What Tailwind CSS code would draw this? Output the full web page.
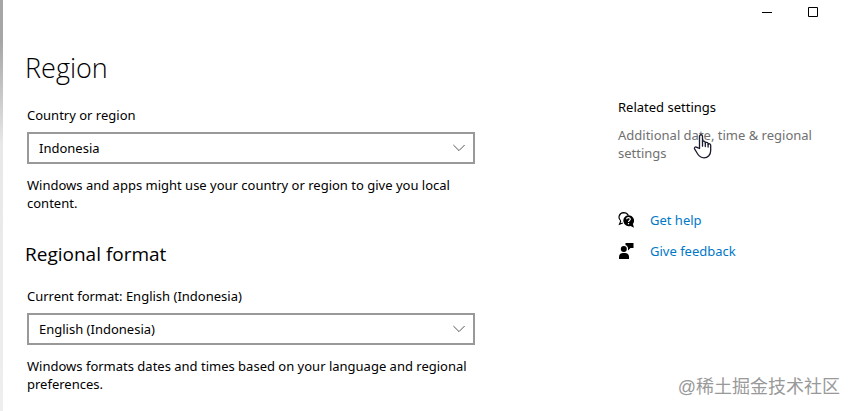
<!doctype html>
<html lang="en">
<head>
  <meta charset="UTF-8">
  <meta name="viewport" content="width=device-width, initial-scale=1.0">
  <title>Region</title>
  <script src="https://cdn.jsdelivr.net/npm/@tailwindcss/browser@4"></script>
</head>
<body class="relative min-h-screen bg-white pl-[3px] font-['Noto_Sans','Open_Sans',sans-serif] text-[13px] leading-[18px] text-black">

  <!-- Window edge -->
  <div class="absolute inset-y-0 left-0 w-[3px] bg-linear-to-b from-[#a6a6a6] from-10% via-[#e8e8e8] via-35% to-[#eeeeee]"></div>

  <!-- Title bar -->
  <header class="flex h-6 justify-end pr-[18px]">
    <button class="flex w-[46px] items-center justify-center" aria-label="Minimize">
      <svg class="size-[10px]" viewBox="0 0 10 10" stroke="#000"><path d="M0 5.5h10"/></svg>
    </button>
    <button class="flex w-[46px] items-center justify-center" aria-label="Maximize">
      <svg class="size-[10px]" viewBox="0 0 10 10" fill="none" stroke="#000"><path d="M.5.5h9v9h-9z"/></svg>
    </button>
  </header>

  <div class="flex justify-between gap-8 pr-6 pl-6">

    <!-- Settings -->
    <main class="w-full max-w-[448px]">
      <h1 class="-ml-0.5 pt-6 font-['Open_Sans',sans-serif] text-[27px] leading-10 font-light">Region</h1>

      <label class="mt-[18px] block" for="country">Country or region</label>
      <div class="relative mt-2">
        <select id="country" class="block h-8 w-full appearance-none border-2 border-[#999999] bg-white pr-8 pl-[10px]">
          <option>Indonesia</option>
        </select>
        <svg class="pointer-events-none absolute top-3 right-[10px] h-2 w-3" viewBox="0 0 12 8" fill="none" stroke="#555"><path d="M.4 1 6 6.600 11.600 1"/></svg>
      </div>
      <p class="mt-3">Windows and apps might use your country or region to give you local content.</p>

      <h2 class="-ml-0.5 mt-7 font-['Open_Sans',sans-serif] text-[19px] leading-7">Regional format</h2>

      <label class="mt-[19px] block" for="format">Current format: English (Indonesia)</label>
      <div class="relative mt-2">
        <select id="format" class="block h-8 w-full appearance-none border-2 border-[#999999] bg-white pr-8 pl-[10px]">
          <option>English (Indonesia)</option>
        </select>
        <svg class="pointer-events-none absolute top-3 right-[10px] h-2 w-3" viewBox="0 0 12 8" fill="none" stroke="#555"><path d="M.4 1 6 6.600 11.600 1"/></svg>
      </div>
      <p class="mt-3">Windows formats dates and times based on your language and regional preferences.</p>
    </main>

    <!-- Related links -->
    <aside class="w-[212px] shrink-0 pt-[74px]">
      <h3>Related settings</h3>
      <div class="relative mt-[10px]">
        <a class="text-[#707070]" href="#">Additional date, time &amp; regional settings</a>
        <svg class="absolute top-2 left-[75px] h-[25px] w-[20px]" viewBox="0 0 20 25" fill="#fff" stroke="#1a1a2e" stroke-width="1.3" stroke-linejoin="round" stroke-linecap="round">
          <path d="M6.5 14.5V2.400c0-2.200 3-2.200 3 0v5.400c.3-1.200 2.800-1 2.800.7v.5c.6-1.200 2.800-.8 2.800.8v.5c.7-1 2.600-.6 2.600 1v5.200c0 4.200-2.700 7.300-6.800 7.300-3 0-4.700-1.400-6.200-3.800l-3-4.800c-1-1.700.9-3 2.200-1.800z"/>
          <path d="M9.500 7.800v4.400M12.300 9v3.600M15.100 10.300v2.800"/>
        </svg>
      </div>
      <a class="mt-[49px] flex items-center gap-4 text-[#0078c8]" href="#">
        <svg class="size-4" viewBox="0 0 16 16">
          <path d="M2.800 8.900C-.6 5.900 1.200.8 5.600.7c2.200 0 3.800 1 4.700 2.700M2.800 8.900 1.500 12.300l3.300-1.300" fill="none" stroke="#000" stroke-width="1.2"/>
          <path d="M10.500 3.200a5.500 5.500 0 0 1 4.400 8.800l1.100 3.800-3.400-1.900a5.500 5.500 0 1 1-2.100-10.700z"/>
          <path d="M8.600 7.200c.1-2.200 3.800-2 3.700.1 0 1.200-1.800 1.300-1.800 2.700M10.500 11v1.200" fill="none" stroke="#fff" stroke-width="1.2"/>
        </svg>
        Get help
      </a>
      <a class="mt-[13px] flex items-center gap-4 text-[#0078c8]" href="#">
        <svg class="size-4" viewBox="0 0 16 16">
          <circle cx="5.8" cy="6" r="3"/>
          <path d="M1 16v-2C1 11.500 2.500 10 5 10h2c2.500 0 4 1.500 4 4v2z"/>
          <path d="M7.500 0h8v5h-3L10 7.500V5c-.3-1.500-1.100-2.400-2.500-3z"/>
        </svg>
        Give feedback
      </a>
    </aside>
  </div>

  <!-- Watermark -->
  <div class="absolute right-[14px] bottom-3 font-['Liberation_Sans','Noto_Sans_CJK_SC',sans-serif] text-[18px] leading-6 text-[#999999]" lang="zh-CN">@稀土掘金技术社区</div>

</body>
</html>
